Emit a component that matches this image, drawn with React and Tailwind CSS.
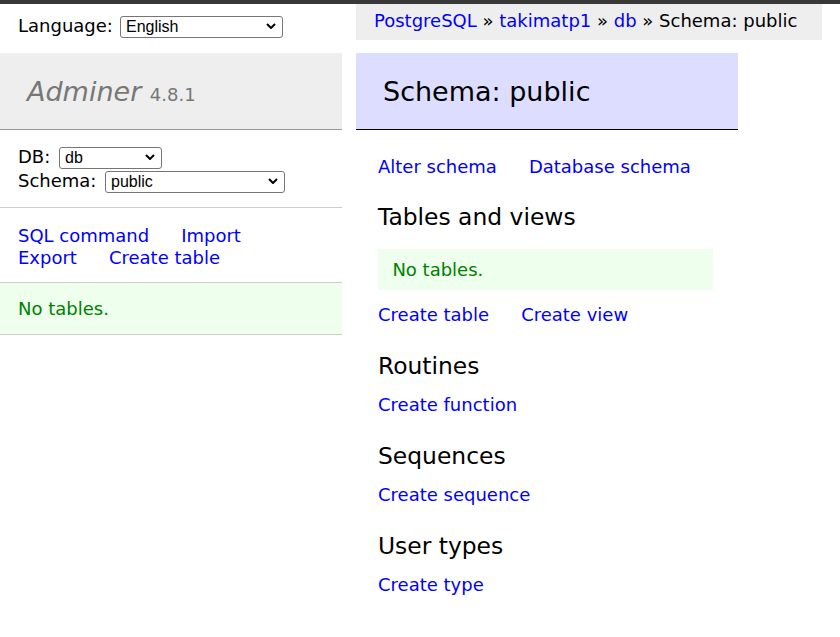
import React from "react";

function Select({ value, options, width }) {
  return (
    <span className="relative inline-block align-middle" style={{ width }}>
      <select
        defaultValue={value}
        className="appearance-none w-full h-[22px] border border-[#767676] rounded-[3px] bg-white pl-[5px] pr-[20px] text-[16px] leading-[20px] text-black [font-family:'Liberation_Sans',Arial,sans-serif] outline-none"
      >
        {options.map((o) => (
          <option key={o}>{o}</option>
        ))}
      </select>
      <svg
        className="pointer-events-none absolute right-[7px] top-[8px]"
        width="10"
        height="6"
        viewBox="0 0 10 6"
      >
        <polyline points="1,1 5,5 9,1" fill="none" stroke="#000" strokeWidth="2" />
      </svg>
    </span>
  );
}

function A({ children }) {
  return <a href="#" className="text-[#0000ff] no-underline whitespace-nowrap">{children}</a>;
}

export default function App() {
  return (
    <div className="min-h-screen bg-white text-black text-[18px] leading-[22.5px] [font-family:'DejaVu_Sans',Verdana,sans-serif]">
      <div className="h-[4px] bg-[#383838]" />
      <div className="flex">
        {/* Left menu */}
        <div className="w-[342px] shrink-0">
          <div className="h-[49px] px-[18px] pt-[6px]">
            <div className="flex items-center h-[32px]">
              <span className="w-[102px]">Language:</span>
              <Select value="English" options={["English"]} width="163px" />
            </div>
          </div>
          <h1 className="h-[77px] bg-[#eee] border-b border-[#999] px-[27px] pt-[22px] text-[27px] leading-[34px] text-[#777] font-normal">
            <a href="#" className="italic text-[#777] no-underline">Adminer</a>{" "}
            <span className="text-[18px] leading-none text-[#777]">4.8.1</span>
          </h1>
          <div className="px-[18px] pt-[15px] pb-[14px] border-b border-[#ccc]">
            <div className="flex items-center h-[24px]">
              <span className="w-[41px]">DB:</span>
              <Select value="db" options={["db"]} width="103px" />
            </div>
            <div className="flex items-center h-[24px]">
              <span className="w-[87px]">Schema:</span>
              <Select value="public" options={["public"]} width="180px" />
            </div>
          </div>
          <div className="px-[18px] pt-[16.5px] pb-[12.3px] border-b border-[#ccc]">
            <div className="flex gap-x-[32px]">
              <A>SQL command</A>
              <A>Import</A>
            </div>
            <div className="flex gap-x-[32px]">
              <A>Export</A>
              <A>Create table</A>
            </div>
          </div>
          <div className="px-[18px] pt-[15.4px] pb-[13.4px] border-b border-[#ccc] bg-[#eeffee] text-[#008000]">
            No tables.
          </div>
        </div>

        {/* Right content */}
        <div className="ml-[14px] flex flex-col">
          <div className="h-[36px] w-[466px] bg-[#eee] px-[18px] leading-[34px] whitespace-nowrap">
            <A>PostgreSQL</A> » <A>takimatp1</A> » <A>db</A> » Schema: public
          </div>
          <h2 className="mt-[13px] h-[77px] w-[382px] bg-[#ddddff] border-b border-black px-[27px] pt-[22px] text-[27px] leading-[34px] font-normal">
            Schema: public
          </h2>
          <div className="pl-[22px] w-[382px]">
            <div className="mt-[26px] flex gap-x-[32px]">
              <A>Alter schema</A>
              <A>Database schema</A>
            </div>
            <h3 className="mt-[24px] text-[23.4px] leading-[29.25px] font-normal">Tables and views</h3>
            <div className="mt-[17.4px] w-[335px] bg-[#eeffee] text-[#008000] px-[14.4px] pt-[9.5px] pb-[8.5px]">No tables.</div>
            <div className="mt-[14.4px] flex gap-x-[32px]">
              <A>Create table</A>
              <A>Create view</A>
            </div>
            <h3 className="mt-[25px] text-[23.4px] leading-[29.25px] font-normal">Routines</h3>
            <div className="mt-[13.3px]">
              <A>Create function</A>
            </div>
            <h3 className="mt-[25px] text-[23.4px] leading-[29.25px] font-normal">Sequences</h3>
            <div className="mt-[13.3px]">
              <A>Create sequence</A>
            </div>
            <h3 className="mt-[25px] text-[23.4px] leading-[29.25px] font-normal">User types</h3>
            <div className="mt-[13.3px]">
              <A>Create type</A>
            </div>
          </div>
        </div>
      </div>
    </div>
  );
}
